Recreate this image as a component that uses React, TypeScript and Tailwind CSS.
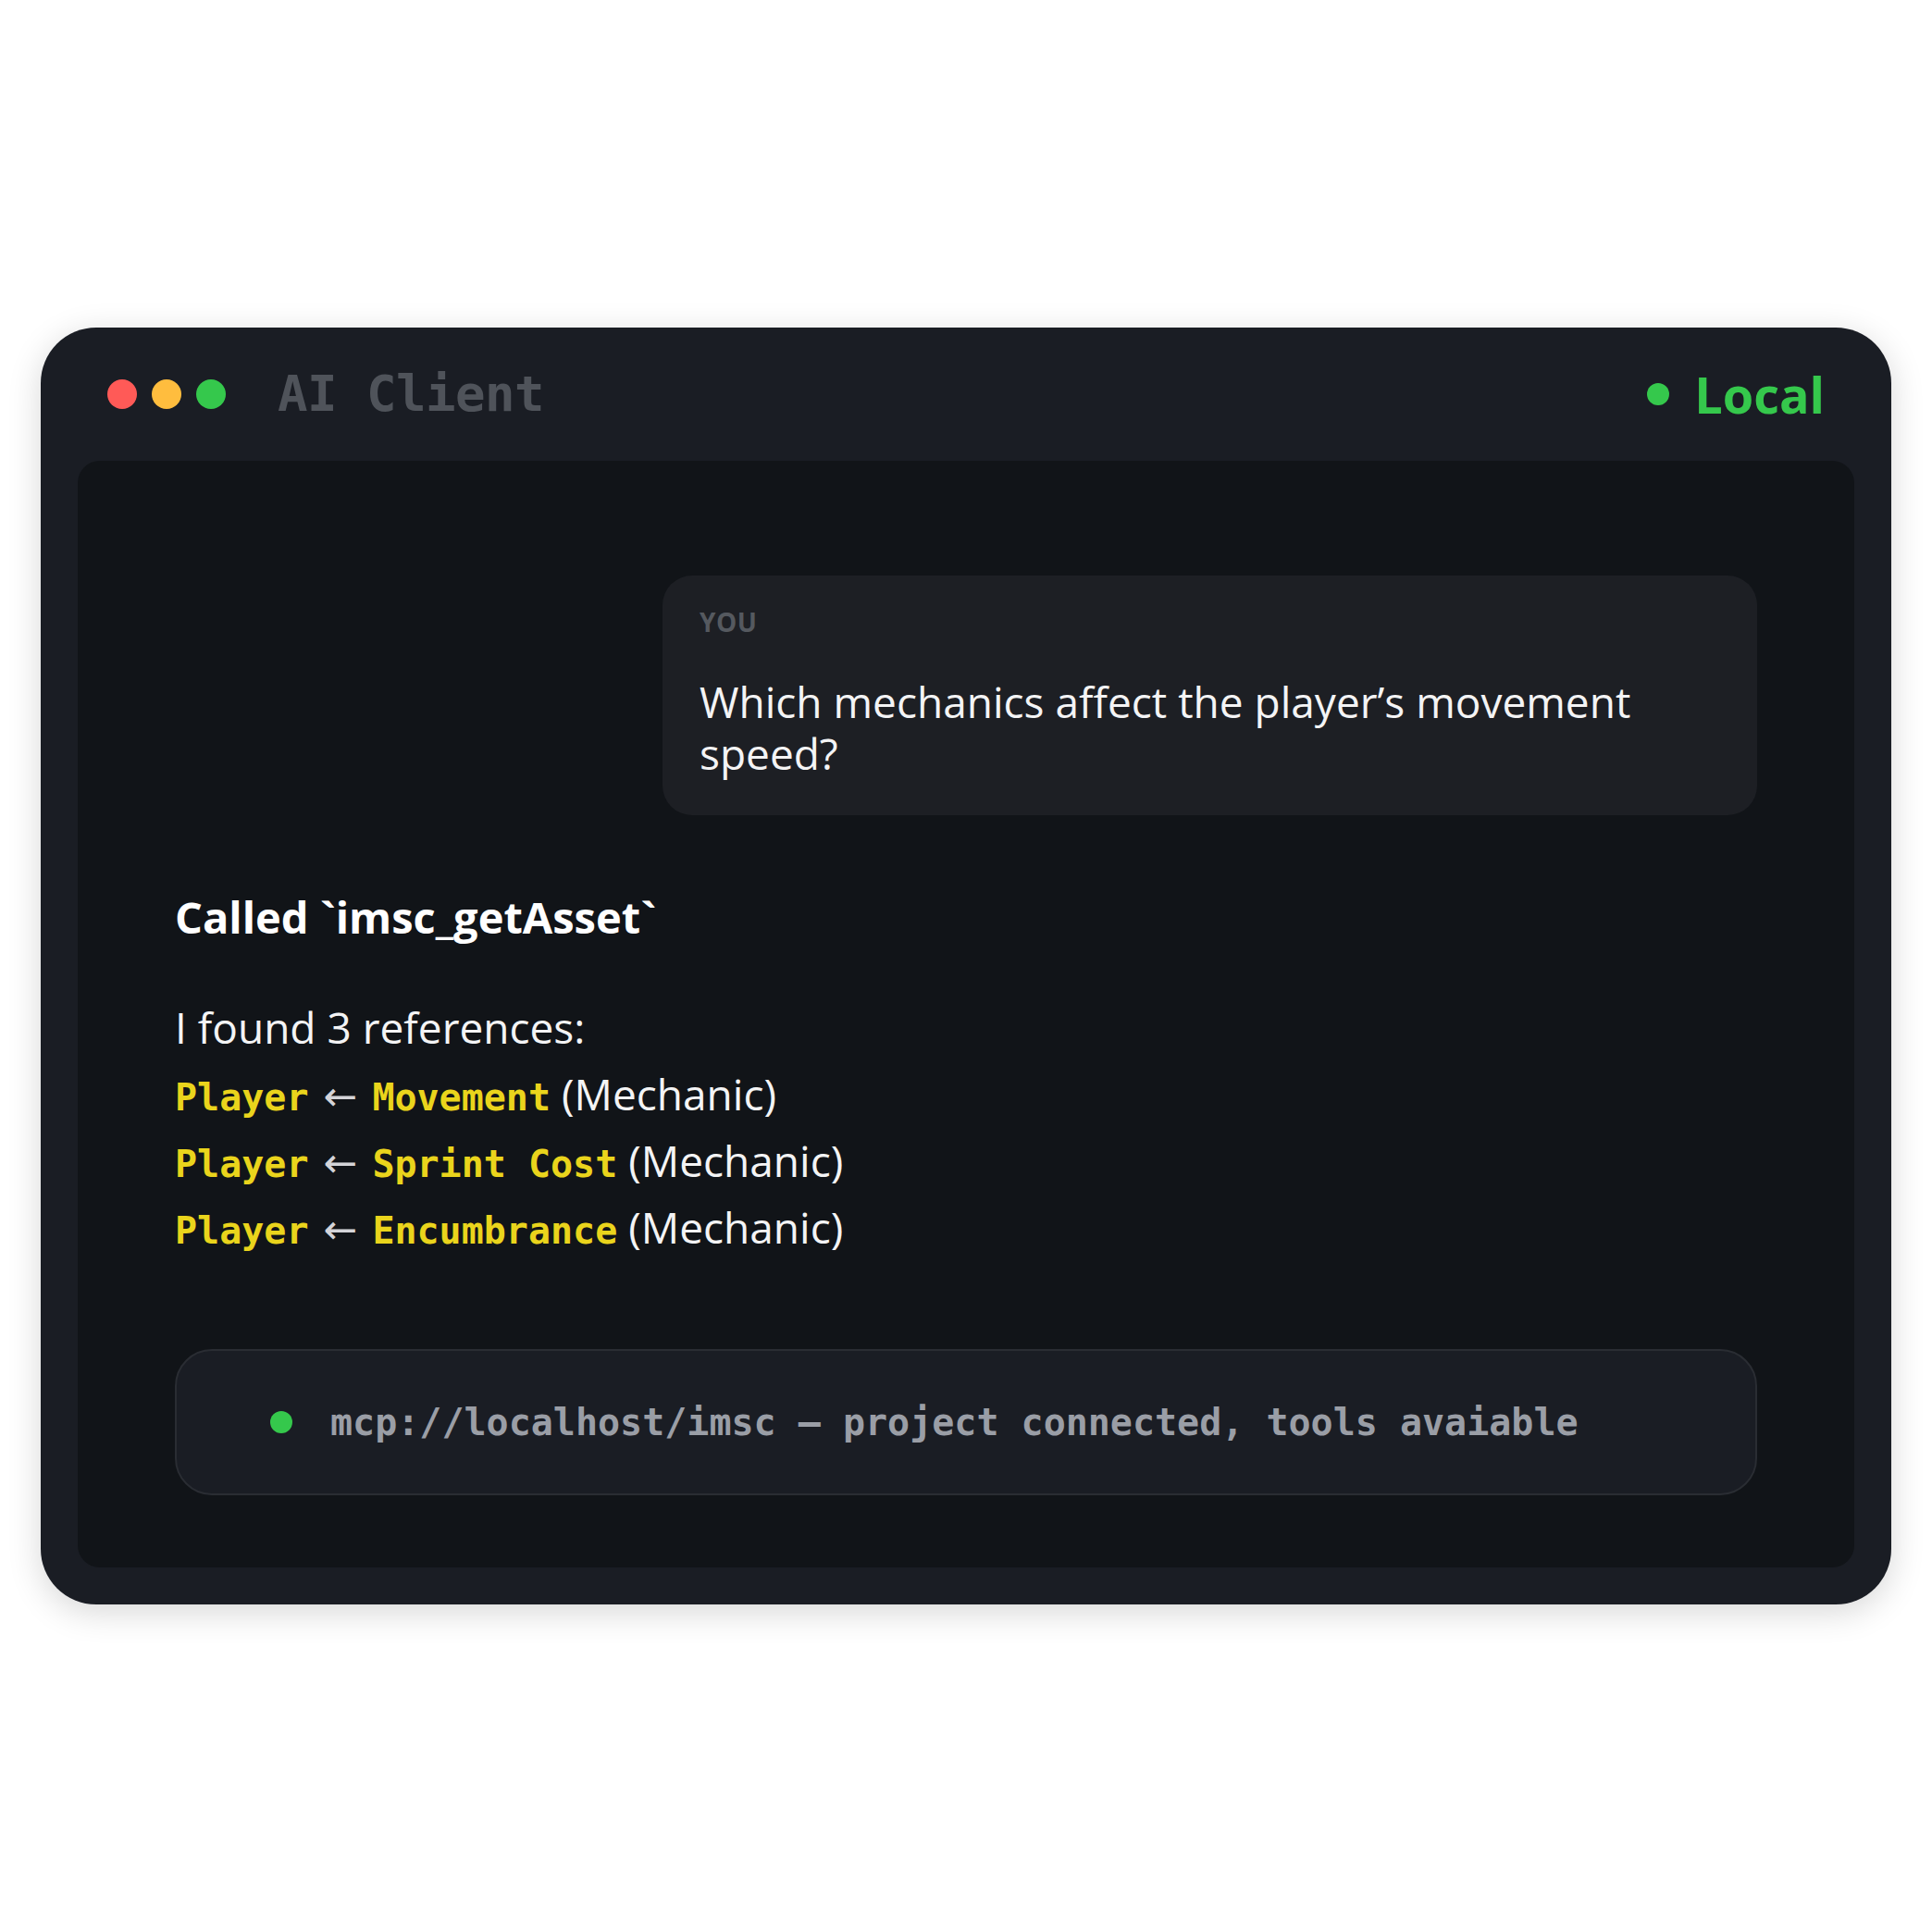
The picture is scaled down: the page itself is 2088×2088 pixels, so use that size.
const rows = [
  { to: "Movement" },
  { to: "Sprint Cost" },
  { to: "Encumbrance" },
];

function Dot({ color, size }: { color: string; size: string }) {
  return <span className={`block rounded-full ${color} ${size}`} />;
}

export default function App() {
  return (
    <div className="min-h-screen bg-white flex items-center justify-center font-['Open_Sans',sans-serif]">
      <div className="w-[2000px] h-[1380px] rounded-[60px] bg-[#1a1d24] shadow-[0_8px_36px_rgba(0,0,0,0.16)] flex flex-col">
        {/* title bar */}
        <header className="h-[144px] shrink-0 flex items-center justify-between pl-[72px] pr-[72px]">
          <div className="flex items-center">
            <div className="flex items-center gap-4">
              <Dot color="bg-[#ff5a57]" size="w-8 h-8" />
              <Dot color="bg-[#ffbd3e]" size="w-8 h-8" />
              <Dot color="bg-[#35c84c]" size="w-8 h-8" />
            </div>
            <span className="ml-[56px] font-['DejaVu_Sans_Mono',monospace] font-bold text-[54px] leading-[60px] tracking-[-0.5px] text-[#4f535a]">
              AI Client
            </span>
          </div>
          <div className="flex items-center gap-[27px]">
            <Dot color="bg-[#35c84c]" size="w-6 h-6" />
            <span className="font-bold text-[54px] leading-[60px] text-[#35c84c]">Local</span>
          </div>
        </header>

        {/* chat panel */}
        <main className="flex-1 mx-10 mb-10 rounded-[24px] bg-[#111418] px-[105px] pt-[124px] flex flex-col">
          <div className="self-end w-[1183px] h-[259px] rounded-[32px] bg-[#1d1f24] px-10 pt-[36px]">
            <div className="text-[28px] leading-[28px] font-bold tracking-[0.5px] text-[#55595f]">YOU</div>
            <p className="mt-[44px] text-[46px] leading-[56px] text-[#f4f4f5]">
              Which mechanics affect the player’s movement speed?
            </p>
          </div>

          <div className="mt-[82px] text-[47px] leading-[56px] font-bold text-white">Called `imsc_getAsset`</div>

          <div className="mt-[55px] h-[72px] text-[46px] leading-[72px] text-[#f4f4f5]">I found 3 references:</div>
          {rows.map((r) => (
            <div key={r.to} className="h-[72px] text-[46px] leading-[72px] text-[#f4f4f5] whitespace-pre">
              <span className="font-['DejaVu_Sans_Mono',monospace] font-bold text-[40px] text-[#ead41c]">Player</span>
              <span className="mx-[16px] font-['DejaVu_Sans',sans-serif] text-[44px] text-[#d4d4d8]">←</span>
              <span className="font-['DejaVu_Sans_Mono',monospace] font-bold text-[40px] text-[#ead41c]">{r.to}</span>
              <span className="ml-[12px]">(Mechanic)</span>
            </div>
          ))}

          {/* connection status */}
          <div className="mt-[96px] h-[158px] rounded-[40px] border-2 border-[#2a2d33] bg-[#1a1d24] pl-[101px] flex items-center gap-[41px]">
            <Dot color="bg-[#35c84c]" size="w-6 h-6" />
            <span className="font-['DejaVu_Sans_Mono',monospace] font-bold text-[40px] leading-[48px] text-[#9a9ea6]">
              mcp://localhost/imsc – project connected, tools avaiable
            </span>
          </div>
        </main>
      </div>
    </div>
  );
}
